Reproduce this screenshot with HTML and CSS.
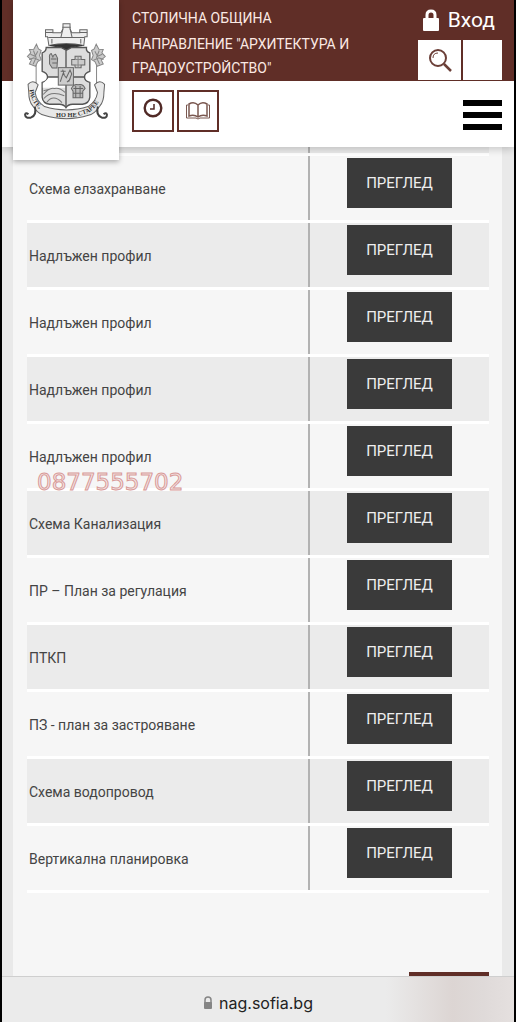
FILE: index.html
```html
<!DOCTYPE html>
<html lang="bg">
<head>
    <meta charset="UTF-8">
    <meta name="viewport" content="width=device-width, initial-scale=1.0">
    <title>Направление "Архитектура и градоустройство"</title>
    <link rel="stylesheet" href="styles.css">
</head>
<body>
    <header class="header">
        <a href="#" class="logo" aria-label="Столична община">
            <svg viewBox="72 66 254 292" fill="none" stroke="#666" stroke-width="3">
                <!-- корона -->
                <path fill="#eee" d="M148 136 L144 110 H138 V89 H160 V98 H184 L190 86 V71 H211 V86 L216 98 H240 V89 H262 V110 H255 L252 136 Q200 124 148 136Z"/>
                <path d="M138 97 H160 M240 97 H262 M188 82 H213 M146 112 H254 M190 86 L184 111 M211 86 L217 111 M157 117 V130 M243 117 V130"/>
                <path fill="#333" stroke="#333" d="M152 136 Q200 130 248 136 L218 141 L200 150 L182 141Z"/>
                <!-- щит -->
                <path fill="#ddd" stroke="#555" stroke-width="4" d="M140 142 H184 L200 150 L216 142 H260 Q258 154 270 158 V213 Q254 218 254 230 Q254 242 270 246 V290 Q268 309 248 311 H219 Q204 312 199 321 Q194 312 179 311 H150 Q130 309 128 290 V246 Q144 242 144 230 Q144 218 128 213 V158 Q140 154 140 142Z"/>
                <path fill="#fff" stroke="none" d="M142 238 Q148 233 146 230 H176 V254 H198 V262 H130 V249Z"/>
                <path stroke="#555" stroke-width="4" d="M199 150 V318 M144 230 H256"/>
                <rect x="176" y="202" width="45" height="52" fill="#ccc"/>
                <path d="M182 244 L190 220 L200 232 L211 209 L216 221 L207 244 M183 213 H198 M189 208 L194 224 M202 245 L213 234"/>
                <path fill="#bbb" d="M150 191 V174 Q148 162 155 160 L160 170 Q163 162 168 162 L174 174 L172 203 H158Z M154 176 H171 M158 188 H174"/>
                <path fill="#ccc" d="M226 168 H244 V178 H255 V194 H244 V202 H226 V194 H216 V178 H226Z"/>
                <path stroke="#888" d="M226 178 H244 M226 194 H244 M235 168 V202"/>
                <path stroke="#777" d="M131 282 Q150 260 164 264 Q180 260 196 276 M133 294 Q154 269 194 286 M142 305 Q161 280 187 306 M132 271 L150 266"/>
                <path fill="#bbb" d="M215 264 Q223 249 235 253 Q250 249 256 264 L249 272 V292 H220 V272Z M221 264 H250 M220 278 H249 M228 256 V292 M241 256 V292"/>
                <!-- клонки -->
                <g stroke="#888">
                    <path d="M110 194 V258 M290 194 V258"/>
                    <path fill="#ccc" d="M108 198 L90 191 L96 179 L84 169 L94 158 L90 148 L103 147 L111 132 L117 146 L125 151 L120 166 L125 178 L115 184Z"/>
                    <path d="M93 162 L107 168 L115 153 M89 178 L103 173 L119 180 M101 192 L110 172 L102 151"/>
                    <path fill="#ccc" d="M292 198 L310 191 L304 179 L316 169 L306 158 L310 148 L297 147 L289 132 L283 146 L275 151 L280 166 L275 178 L285 184Z"/>
                    <path d="M307 162 L293 168 L285 153 M311 178 L297 173 L281 180 M299 192 L290 172 L298 151"/>
                </g>
                <!-- лента -->
                <path fill="#e8e8e8" d="M86 252 Q100 236 116 253 L107 276 Q111 302 135 318 Q165 328 200 328 Q235 328 265 318 Q289 302 293 276 L284 253 Q300 236 314 252 L312 275 Q312 302 300 316 Q285 339 266 344 Q235 354 200 354 Q165 354 134 344 Q115 339 100 316 Q88 302 88 275Z"/>
                <path stroke="#444" stroke-width="6" d="M106 318 Q113 345 94 351 Q78 354 77 342 Q79 334 87 341 M294 318 Q287 345 306 351 Q321 354 321 342 Q319 334 311 341"/>
                <path id="ribbon-left" stroke="none" d="M90 268 Q94 312 138 338 L162 344"/>
                <path id="ribbon-right" stroke="none" d="M236 346 L262 338 Q302 318 308 262"/>
                <g class="motto">
                    <text><textPath href="#ribbon-left">РАСТЕ,</textPath></text>
                    <text x="200" y="349" text-anchor="middle">НО НЕ</text>
                    <text><textPath href="#ribbon-right">СТАРЕЕ</textPath></text>
                </g>
            </svg>
        </a>
        <div class="header-top">
            <div class="title">
                <p>СТОЛИЧНА ОБЩИНА</p>
                <p>НАПРАВЛЕНИЕ "АРХИТЕКТУРА И ГРАДОУСТРОЙСТВО"</p>
            </div>
            <div class="user-area">
                <a href="#" class="login">
                    <svg width="18" height="22" viewBox="0 0 18 22">
                        <path d="M5 10 V6 Q5 2 9 2 Q13 2 13 6 V10" fill="none" stroke="#fff" stroke-width="3"/>
                        <rect x="1" y="9" width="16" height="13" rx="1" fill="#fff"/>
                    </svg>
                    Вход
                </a>
                <form class="search">
                    <button type="button" class="search-btn" aria-label="Търсене">
                        <svg width="24" height="24" viewBox="0 0 24 24" fill="none" stroke="#6b3f38">
                            <circle cx="10" cy="10" r="8" stroke-width="2"/>
                            <path d="M5 10 Q5 5 10 5" stroke-width="1"/>
                            <path d="M16 16 L23 23" stroke-width="2.5"/>
                        </svg>
                    </button>
                    <input type="text" class="search-input" aria-label="Търсене">
                </form>
            </div>
        </div>
        <div class="header-nav">
            <a href="#" class="icon-btn" aria-label="Работно време">
                <svg width="20" height="20" viewBox="0 0 20 20" fill="none" stroke="#512a26">
                    <circle cx="10" cy="10" r="8.3" stroke-width="2.4"/>
                    <path d="M11 6 V11 H7" stroke-width="1.5"/>
                </svg>
            </a>
            <a href="#" class="icon-btn book" aria-label="Регистри">
                <svg width="26" height="20" viewBox="0 0 26 20" fill="none" stroke="#7a5850" stroke-width="1.5">
                    <path d="M13 4 Q9 0 4 3 V15 Q9 13 13 16 Q17 13 22 15 V3 Q17 0 13 4 V16"/>
                    <path d="M3 4 H1.5 V17 H11 L13 18 L15 17 H24.5 V4 H23" stroke-width="1"/>
                </svg>
            </a>
            <button type="button" class="menu-btn" aria-label="Меню">
                <span></span>
                <span></span>
                <span></span>
            </button>
        </div>
    </header>

    <main class="content">
        <table class="documents">
            <tbody>
                <tr class="cut"><td></td><td></td></tr>
                <tr><td>Схема елзахранване</td><td><button type="button">ПРЕГЛЕД</button></td></tr>
                <tr><td>Надлъжен профил</td><td><button type="button">ПРЕГЛЕД</button></td></tr>
                <tr><td>Надлъжен профил</td><td><button type="button">ПРЕГЛЕД</button></td></tr>
                <tr><td>Надлъжен профил</td><td><button type="button">ПРЕГЛЕД</button></td></tr>
                <tr><td>Надлъжен профил<span class="phone">0877555702</span></td><td><button type="button">ПРЕГЛЕД</button></td></tr>
                <tr><td>Схема Канализация</td><td><button type="button">ПРЕГЛЕД</button></td></tr>
                <tr><td>ПР – План за регулация</td><td><button type="button">ПРЕГЛЕД</button></td></tr>
                <tr><td>ПТКП</td><td><button type="button">ПРЕГЛЕД</button></td></tr>
                <tr><td>ПЗ - план за застрояване</td><td><button type="button">ПРЕГЛЕД</button></td></tr>
                <tr><td>Схема водопровод</td><td><button type="button">ПРЕГЛЕД</button></td></tr>
                <tr><td>Вертикална планировка</td><td><button type="button">ПРЕГЛЕД</button></td></tr>
            </tbody>
        </table>
        <div class="next-block"></div>
    </main>

    <footer class="address-bar">
        <svg width="10" height="14" viewBox="0 0 10 14">
            <path d="M2 7 V4 Q2 1 5 1 Q8 1 8 4 V7" fill="none" stroke="#858585" stroke-width="1.5"/>
            <rect x="1" y="6" width="8" height="7" rx="1" fill="#858585"/>
        </svg>
        <span>nag.sofia.bg</span>
    </footer>
</body>
</html>
```
FILE: styles.css
```css
* {
    box-sizing: border-box;
}

body {
    margin: 0;
    min-height: 100vh;
    display: flex;
    flex-direction: column;
    background-color: #e9e9e9;
    border-left: 2px solid #000;
    border-right: 2px solid #000;
    font-family: Roboto, "Noto Sans", sans-serif;
    color: #444;
}

button {
    border: none;
    padding: 0;
    font-family: inherit;
    cursor: pointer;
}

.header {
    position: relative;
    z-index: 1;
    background-color: #fff;
    box-shadow: 0 2px 8px rgba(0, 0, 0, 0.2);
}

.logo {
    position: absolute;
    top: 0;
    left: 11px;
    width: 106px;
    height: 160px;
    padding: 22px 10px;
    background-color: #fff;
    box-shadow: 0 2px 5px rgba(0, 0, 0, 0.3);
}

.logo svg {
    display: block;
    width: 86px;
    height: 98px;
}

.motto {
    fill: #333;
    stroke: none;
    font-family: "Liberation Serif", serif;
    font-size: 19px;
    font-weight: bold;
}

.header-top {
    display: flex;
    justify-content: space-between;
    height: 81px;
    padding: 0 12px 0 130px;
    background-color: #602e27;
    color: #fbe9e4;
}

.title {
    max-width: 240px;
    padding-top: 6px;
    font-size: 14px;
    line-height: 24px;
}

.title p {
    margin: 0 0 2px;
}

.user-area {
    display: flex;
    flex-direction: column;
    align-items: flex-end;
    flex-shrink: 0;
}

.login {
    display: flex;
    align-items: center;
    gap: 8px;
    height: 40px;
    padding-right: 7px;
    color: #fff;
    font-size: 21px;
    text-decoration: none;
}

.search {
    display: flex;
    gap: 2px;
    height: 40px;
}

.search-btn {
    display: flex;
    align-items: center;
    justify-content: center;
    width: 43px;
    background-color: #fff;
}

.search-input {
    width: 39px;
    padding: 4px;
    border: none;
    border-radius: 0;
    background-color: #fff;
}

.header-nav {
    display: flex;
    align-items: center;
    gap: 3px;
    height: 66px;
    padding: 0 12px 6px 130px;
}

.icon-btn {
    display: flex;
    justify-content: center;
    width: 42px;
    height: 42px;
    padding-top: 6px;
    border: 2px solid #602e27;
}

.book {
    padding-top: 9px;
}

.menu-btn {
    display: flex;
    flex-direction: column;
    gap: 6px;
    width: 39px;
    margin: 8px 0 0 auto;
    background: none;
}

.menu-btn span {
    height: 6px;
    background-color: #000;
}

.content {
    flex: 1;
    display: flex;
    flex-direction: column;
    margin: 0 12px 0 11px;
    padding: 0 13px 0 14px;
    background-color: #f6f6f6;
}

.documents {
    width: 100%;
    table-layout: fixed;
    border-spacing: 0;
    font-size: 14px;
}

.documents td {
    position: relative;
    height: 67px;
    padding: 2px 2px 0;
    border-bottom: 3px solid #fff;
}

.documents td:last-child {
    width: 181px;
    padding: 0 0 10px 2px;
    background: linear-gradient(#b2b2b2, #b2b2b2) left / 2px 100% no-repeat;
    background-clip: padding-box;
}

.documents tr:nth-child(odd) {
    background-color: #ebebeb;
}

.documents .cut td {
    height: 9px;
    padding: 0;
}

.documents button {
    display: block;
    width: 105px;
    height: 50px;
    margin: 0 auto;
    background-color: #3a3a3a;
    color: #eee;
    font-size: 15px;
}

.phone {
    position: absolute;
    top: 46px;
    left: 10px;
    z-index: 1;
    font-family: "DejaVu Sans", sans-serif;
    font-size: 23px;
    line-height: 24px;
    color: #f3e6e5;
    -webkit-text-stroke: 1px #d99a98;
}

.next-block {
    align-self: flex-end;
    width: 80px;
    height: 4px;
    margin-top: auto;
    background-color: #602e27;
}

.address-bar {
    display: flex;
    align-items: center;
    justify-content: center;
    gap: 6px;
    height: 46px;
    padding-top: 6px;
    border-top: 1px solid #cfcfcf;
    background: linear-gradient(to right, #ebebeb 75%, #dcd5d3 88%, #dfdad9 94%, #e5e0df);
    color: #222;
    font-family: Inter, sans-serif;
    font-size: 16px;
}
```
